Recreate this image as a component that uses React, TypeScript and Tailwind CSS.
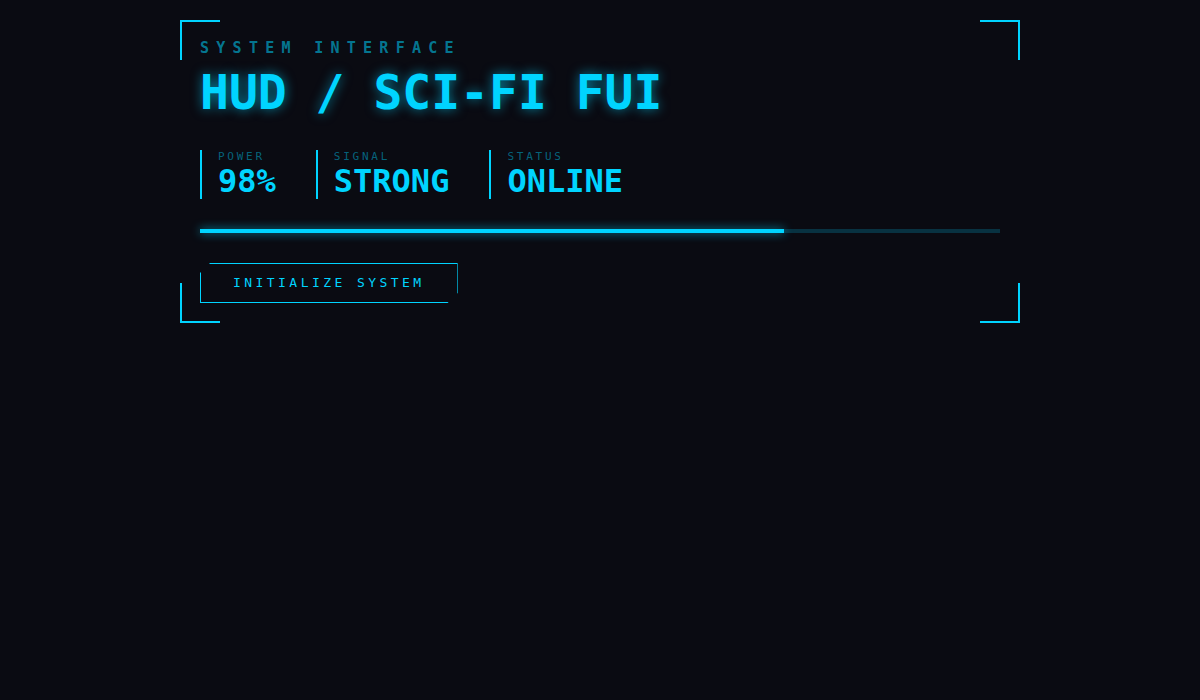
import React from 'react'

const mono = "font-['DejaVu_Sans_Mono',monospace]"

/**
 * Corner bracket - 40px L shape drawn with two borders
 */
const Corner: React.FC<{ pos: string }> = ({ pos }) => (
  <span className={`absolute w-10 h-10 border-[#00d4ff] ${pos}`} />
)

const stats = [
  { label: 'POWER', value: '98%' },
  { label: 'SIGNAL', value: 'STRONG' },
  { label: 'STATUS', value: 'ONLINE' },
]

export default function App() {
  const level = 73

  return (
    <div className={`min-h-[700px] bg-[#0a0b12] pt-5 ${mono}`}>
      <div className="relative mx-auto w-[840px] px-5 pt-[18px] pb-5">
        {/* Frame corners */}
        <Corner pos="top-0 left-0 border-t-2 border-l-2" />
        <Corner pos="top-0 right-0 border-t-2 border-r-2" />
        <Corner pos="bottom-0 left-0 border-b-2 border-l-2" />
        <Corner pos="bottom-0 right-0 border-b-2 border-r-2" />

        {/* Heading */}
        <div className="text-[15px] leading-[20px] font-bold tracking-[0.485em] text-[#00d4ff]/55">
          SYSTEM INTERFACE
        </div>
        <h1 className="mt-[4px] text-[48px] leading-[60px] font-bold text-[#00d4ff] [text-shadow:0_0_12px_rgba(0,212,255,0.6)]">
          HUD / SCI-FI FUI
        </h1>

        {/* Readouts */}
        <div className="mt-[28px] flex gap-10">
          {stats.map((s) => (
            <div key={s.label} className="border-l-2 border-[#00d4ff] pl-4">
              <div className="text-[11px] leading-[13px] tracking-[0.25em] text-[#00d4ff]/45">
                {s.label}
              </div>
              <div className="text-[32px] leading-[36px] font-bold text-[#00d4ff]">{s.value}</div>
            </div>
          ))}
        </div>

        {/* Level bar */}
        <div className="mt-[30px] h-1 w-full bg-[#00d4ff]/20">
          <div
            className="h-full bg-[#00d4ff] shadow-[0_0_10px_rgba(0,212,255,0.7)]"
            style={{ width: `${level}%` }}
          />
        </div>

        {/* Action button with clipped corners */}
        <button className="mt-[30px] h-10 border border-[#00d4ff] px-8 text-[13px] tracking-[0.265em] text-[#00d4ff] [clip-path:polygon(10px_0,100%_0,100%_calc(100%-10px),calc(100%-10px)_100%,0_100%,0_10px)]">
          INITIALIZE SYSTEM
        </button>
      </div>
    </div>
  )
}
